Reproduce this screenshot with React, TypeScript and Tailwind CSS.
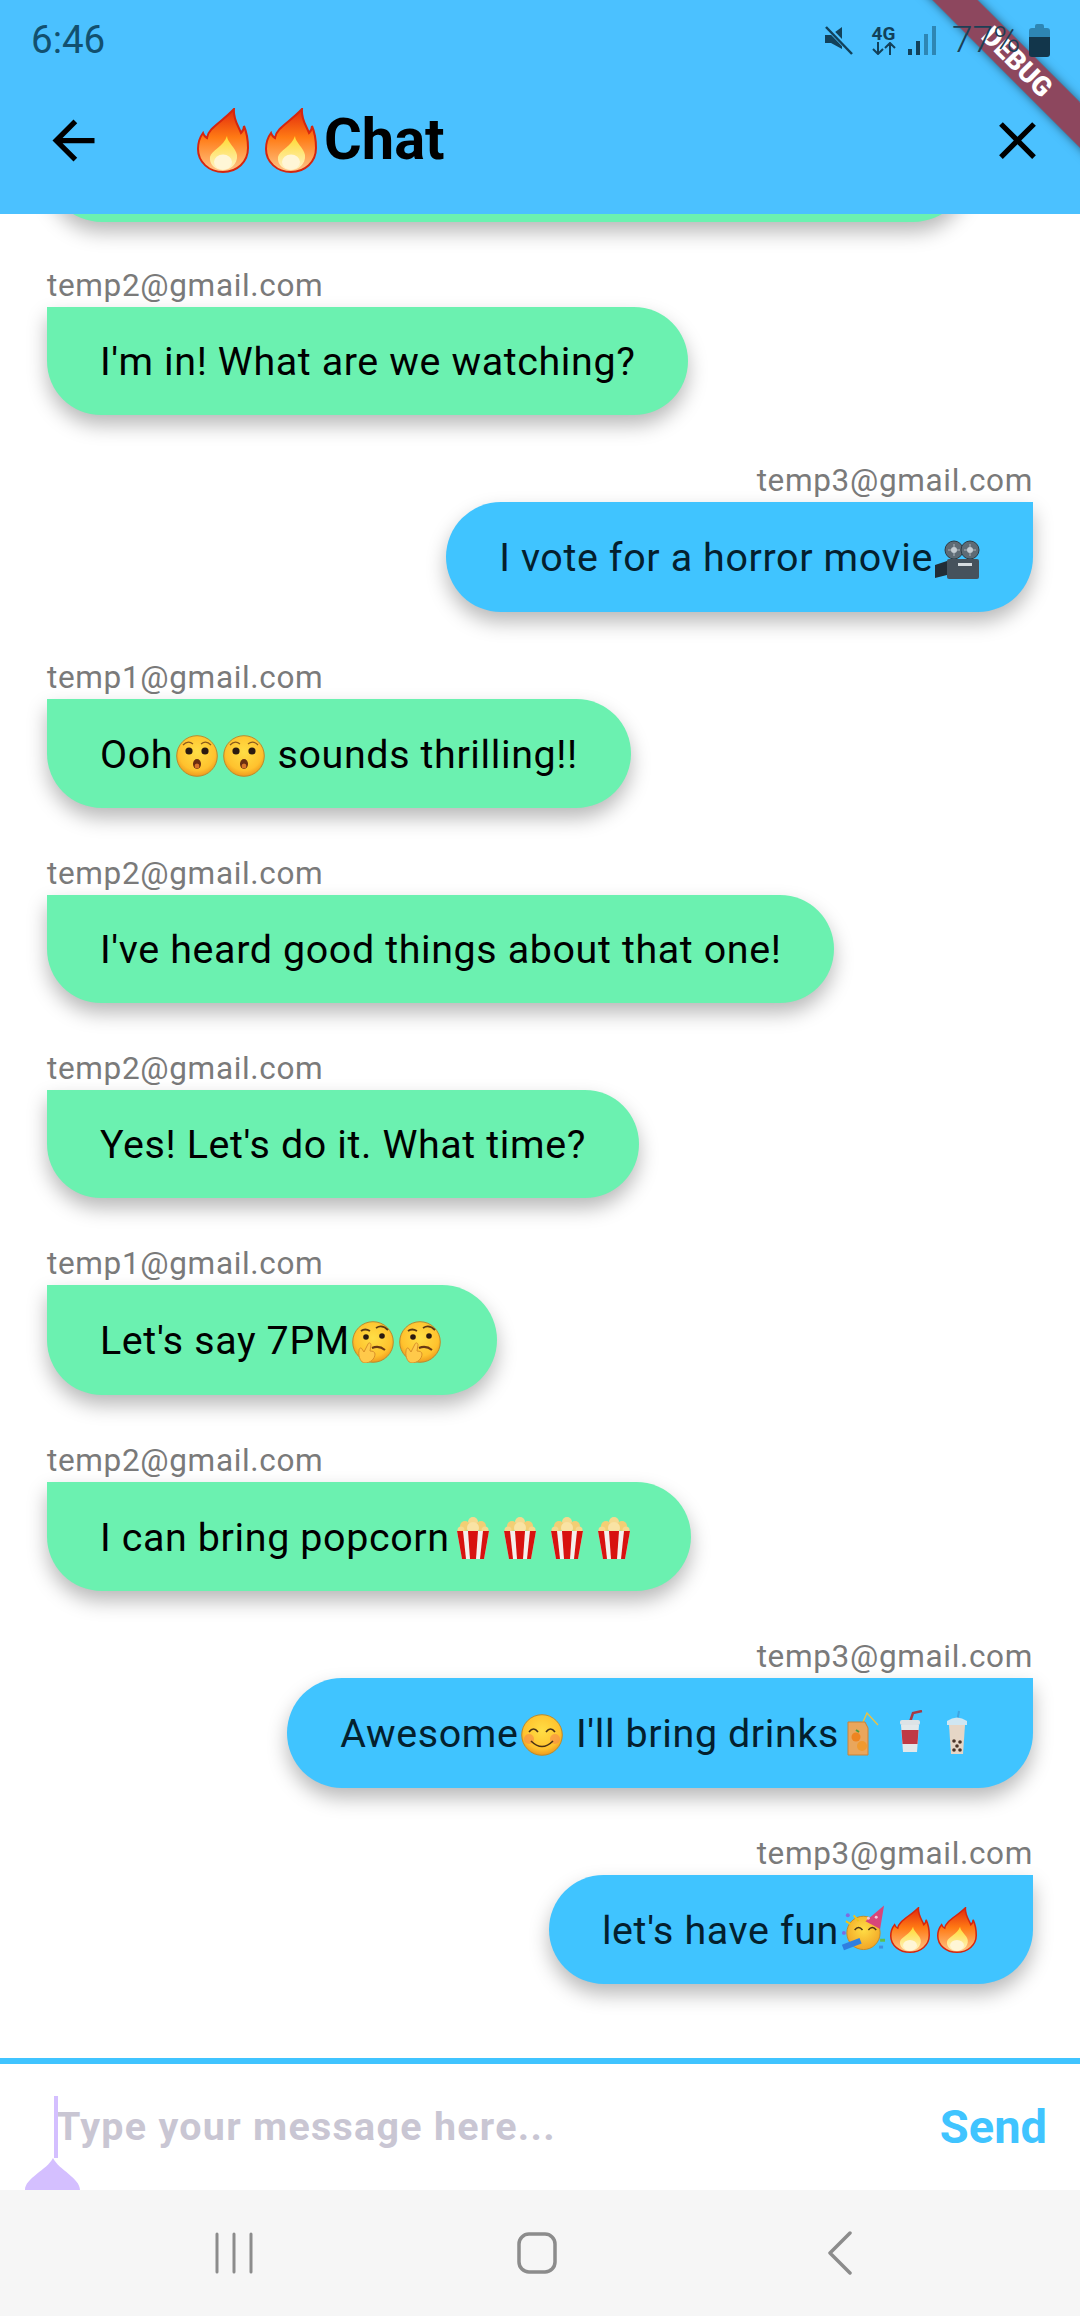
import React from 'react';

// Emoji are drawn by hand: the sandbox has no colour emoji font
function Fire({ w = 40, h = 46 }: { w?: number; h?: number }) {
  return (
    <svg width={w} height={h} viewBox="0 0 52 65" preserveAspectRatio="none">
      <defs>
        <linearGradient id="fireOuter" x1="0" y1="0" x2="0" y2="1">
          <stop offset="0" stopColor="#E2280C" />
          <stop offset="0.45" stopColor="#FF7A14" />
          <stop offset="1" stopColor="#FFC78A" />
        </linearGradient>
        <linearGradient id="fireInner" x1="0" y1="0" x2="0" y2="1">
          <stop offset="0" stopColor="#FFD92E" />
          <stop offset="0.6" stopColor="#FFE98A" />
          <stop offset="1" stopColor="#FFF3C8" />
        </linearGradient>
      </defs>
      <path
        d="M37 1C36 11 41 17 44 25C46 23 47 20 47 18C50 25 51 32 51 40C51 54 40 64 26 64C12 64 1 54 1 41C1 35 3 29 6 25C7 28 8 29 10 30C11 20 25 14 37 1Z"
        fill="url(#fireOuter)"
        stroke="#D5260F"
        strokeWidth="2"
      />
      <path d="M30 28C30 34 39 40 40 47C41 56 33 62 26 62C18 62 12 56 13 49C14 43 27 38 30 28Z" fill="url(#fireInner)" />
      <ellipse cx="26" cy="54" rx="9" ry="7.5" fill="#FFF6D6" />
    </svg>
  );
}

function Face({ children }: { children?: React.ReactNode }) {
  return (
    <svg width="42" height="42" viewBox="0 0 42 42">
      <defs>
        <radialGradient id="faceFill" cx="0.5" cy="0.4" r="0.6">
          <stop offset="0" stopColor="#FFDE45" />
          <stop offset="0.75" stopColor="#FFC22E" />
          <stop offset="1" stopColor="#EE9A1E" />
        </radialGradient>
      </defs>
      <circle cx="21" cy="21" r="20.3" fill="url(#faceFill)" stroke="#BC8A2C" strokeWidth="1" />
      {children}
    </svg>
  );
}

function Hushed() {
  return (
    <Face>
      <path d="M7 10Q12 5 17 9M25 9Q30 5 35 10" fill="none" stroke="#8A5A1C" strokeWidth="1.2" />
      <circle cx="13" cy="16" r="3.6" fill="#2B1A10" />
      <circle cx="29" cy="16" r="3.6" fill="#2B1A10" />
      <ellipse cx="21" cy="29" rx="4" ry="5" fill="#6B2E10" />
      <ellipse cx="21" cy="31" rx="2.4" ry="2.5" fill="#D8742A" />
    </Face>
  );
}

function Thinking() {
  return (
    <Face>
      <path d="M9 10Q13 7 18 10M24 7Q30 3 36 9" fill="none" stroke="#5B3A12" strokeWidth="1.8" />
      <circle cx="14" cy="16" r="2.8" fill="#2B1A10" />
      <circle cx="30" cy="15" r="2.8" fill="#2B1A10" />
      <path d="M20 27Q27 24 33 29" fill="none" stroke="#6B3A12" strokeWidth="2" />
      <path d="M7 30C7 27 9 26 10 28L12 31L16 23C17 21 19 22 19 24L18 30C21 30 23 31 23 33C23 38 18 42 13 42C9 42 6 36 7 30Z" fill="#FFC94A" stroke="#D9902A" strokeWidth="1" />
    </Face>
  );
}

function Smile() {
  return (
    <Face>
      <circle cx="8" cy="25" r="5" fill="#F7894A" opacity="0.6" />
      <circle cx="34" cy="25" r="5" fill="#F7894A" opacity="0.6" />
      <path d="M8 18Q12.5 12 17 18M25 18Q29.5 12 34 18" fill="none" stroke="#4A3214" strokeWidth="1.6" />
      <path d="M10 27Q21 38 32 27" fill="none" stroke="#4A3214" strokeWidth="1.6" />
    </Face>
  );
}

function Party() {
  return (
    <svg width="48" height="50" viewBox="0 0 48 50">
      <defs>
        <radialGradient id="partyFill" cx="0.5" cy="0.4" r="0.6">
          <stop offset="0" stopColor="#FFDE45" />
          <stop offset="1" stopColor="#F2A526" />
        </radialGradient>
      </defs>
      <circle cx="25" cy="30" r="17" fill="url(#partyFill)" stroke="#C48C2A" strokeWidth="1" />
      <path d="M27 18L46 2L42 26Z" fill="#D8467A" />
      <circle cx="30" cy="15" r="1.5" fill="#F5C6DA" />
      <circle cx="38" cy="14" r="1.5" fill="#F5C6DA" />
      <path d="M15 12L20 18M12 21L7 18" stroke="#F0C419" strokeWidth="2" />
      <path d="M16 27Q20 22 24 27M30 27Q34 22 38 27" fill="none" stroke="#4A3214" strokeWidth="1.5" />
      <path d="M22 38L4 45" stroke="#2F7FE0" strokeWidth="6" />
      <circle cx="5" cy="30" r="2" fill="#7F6BE0" />
      <circle cx="9" cy="12" r="2" fill="#7F6BE0" />
      <rect x="42" y="36" width="5" height="3" fill="#5FBF4A" />
      <rect x="41" y="43" width="4" height="3" fill="#3F8FE0" />
    </svg>
  );
}

function Popcorn() {
  return (
    <svg width="34" height="44" viewBox="0 0 34 44">
      <circle cx="17" cy="6" r="5" fill="#F6D98E" />
      <circle cx="9" cy="10" r="5" fill="#F3CE74" />
      <circle cx="25" cy="10" r="5" fill="#F3CE74" />
      <circle cx="17" cy="12" r="6" fill="#F9E3A4" />
      <circle cx="5" cy="14" r="3.5" fill="#F6D98E" />
      <circle cx="29" cy="14" r="3.5" fill="#F6D98E" />
      <path d="M1 15H33L28 43H6Z" fill="#F4F0EC" />
      <path d="M1 15H7L10 43H6Z" fill="#D8120F" />
      <path d="M12 15H22L20 43H14Z" fill="#D8120F" />
      <path d="M27 15H33L28 43H24Z" fill="#D8120F" />
    </svg>
  );
}

function MovieCamera() {
  return (
    <svg width="46" height="40" viewBox="0 0 46 40">
      <circle cx="20" cy="10" r="9" fill="#5E6B75" stroke="#2F3A42" strokeWidth="1" />
      <circle cx="36" cy="10" r="9" fill="#5E6B75" stroke="#2F3A42" strokeWidth="1" />
      <circle cx="20" cy="10" r="3" fill="#C4CCD2" />
      <circle cx="36" cy="10" r="3" fill="#C4CCD2" />
      <path d="M20 4V7M20 13V16M14 10H17M23 10H26M36 4V7M36 13V16M30 10H33M39 10H42" stroke="#AEB6BC" strokeWidth="1" />
      <rect x="13" y="19" width="32" height="20" rx="2" fill="#46525C" />
      <rect x="24" y="23" width="14" height="3" fill="#D5DCE0" />
      <path d="M1 25L13 21V35L1 38Z" fill="#222D36" />
    </svg>
  );
}

function JuiceBox() {
  return (
    <svg width="36" height="46" viewBox="0 0 36 46">
      <path d="M18 12L22 3L33 15" fill="none" stroke="#E5C24A" strokeWidth="1.5" />
      <path d="M3 12H20L23 18V45H3Z" fill="#E9A65C" stroke="#C88339" strokeWidth="1" />
      <circle cx="11" cy="27" r="4.5" fill="#EE8420" />
      <circle cx="17" cy="36" r="5" fill="#F09A2E" />
      <path d="M11 20L14 22" stroke="#4F9A3A" strokeWidth="2" />
    </svg>
  );
}

function CupStraw() {
  return (
    <svg width="34" height="46" viewBox="0 0 34 46">
      <path d="M17 12L20 3L29 1" fill="none" stroke="#A53A44" strokeWidth="2.5" />
      <rect x="7" y="10" width="20" height="5" rx="2" fill="#DDE3E6" />
      <path d="M8 15H26L24 42H10Z" fill="#E3E8EA" />
      <path d="M8.5 20H25.5L24.5 34H9.5Z" fill="#C03A44" />
    </svg>
  );
}

function BubbleTea() {
  return (
    <svg width="30" height="46" viewBox="0 0 30 46">
      <path d="M15 12L17 1" stroke="#3FA4E0" strokeWidth="2" />
      <path d="M5 11Q15 4 25 11V15H5Z" fill="#CFE6F2" />
      <path d="M7 15H23L21 44H9Z" fill="#E6D6C6" />
      <circle cx="12" cy="31" r="1.8" fill="#4A3428" />
      <circle cx="18" cy="32" r="1.8" fill="#4A3428" />
      <circle cx="15" cy="36" r="1.8" fill="#4A3428" />
      <circle cx="12" cy="40" r="1.8" fill="#4A3428" />
      <circle cx="18" cy="40" r="1.8" fill="#4A3428" />
    </svg>
  );
}

function Emo({ children }: { children: React.ReactNode }) {
  return <span className="inline-flex w-[47px] h-[44px] justify-center items-end align-[-9px] leading-none tracking-normal">{children}</span>;
}

type Msg = { sender: string; mine?: boolean; tall?: boolean; body: React.ReactNode };

const messages: Msg[] = [
  { sender: 'temp2@gmail.com', body: "I'm in! What are we watching?" },
  {
    sender: 'temp3@gmail.com',
    mine: true,
    tall: true,
    body: (
      <>
        I vote for a horror movie<Emo><MovieCamera /></Emo>
      </>
    ),
  },
  {
    sender: 'temp1@gmail.com',
    tall: true,
    body: (
      <>
        Ooh<Emo><Hushed /></Emo><Emo><Hushed /></Emo> sounds thrilling!!
      </>
    ),
  },
  { sender: 'temp2@gmail.com', body: "I've heard good things about that one!" },
  { sender: 'temp2@gmail.com', body: "Yes! Let's do it. What time?" },
  {
    sender: 'temp1@gmail.com',
    tall: true,
    body: (
      <>
        Let's say 7PM<Emo><Thinking /></Emo><Emo><Thinking /></Emo>
      </>
    ),
  },
  {
    sender: 'temp2@gmail.com',
    tall: true,
    body: (
      <>
        I can bring popcorn<Emo><Popcorn /></Emo><Emo><Popcorn /></Emo><Emo><Popcorn /></Emo><Emo><Popcorn /></Emo>
      </>
    ),
  },
  {
    sender: 'temp3@gmail.com',
    mine: true,
    tall: true,
    body: (
      <>
        Awesome<Emo><Smile /></Emo> I'll bring drinks<Emo><JuiceBox /></Emo><Emo><CupStraw /></Emo><Emo><BubbleTea /></Emo>
      </>
    ),
  },
  {
    sender: 'temp3@gmail.com',
    mine: true,
    tall: true,
    body: (
      <>
        let's have fun<Emo><Party /></Emo><Emo><Fire /></Emo><Emo><Fire /></Emo>
      </>
    ),
  },
];

function Bubble({ msg }: { msg: Msg }) {
  return (
    <div className={msg.mine ? 'flex flex-col items-end' : 'flex flex-col items-start'}>
      <div className="h-[42px] leading-[42px] text-[31.5px] tracking-[0.66px] text-[#7A7A7A]">{msg.sender}</div>
      <div
        className={`${msg.tall ? 'h-[109.5px] leading-[109.5px]' : 'h-[108px] leading-[108px]'} ${
          msg.mine ? 'bg-[#40C4FF] text-[#04202E] rounded-tl-[55px]' : 'bg-[#6BF1B0] text-black rounded-tr-[55px]'
        } px-[53px] pt-[1px] text-[39.4px] tracking-[0.63px] whitespace-nowrap rounded-b-[55px] shadow-[0_10px_20px_rgba(0,0,0,0.28)]`}
      >
        {msg.body}
      </div>
    </div>
  );
}

function StatusIcons() {
  return (
    <div className="flex items-center text-[#12415A]">
      <svg width="30" height="30" viewBox="0 0 30 30" className="mr-[17px]">
        <path d="M1 10H7L18 2V24L7 18H1Z" fill="#12415A" />
        <path d="M2 1L29 29" stroke="#4BC1FF" strokeWidth="5" />
        <path d="M2 2L28 29" stroke="#12415A" strokeWidth="2.5" />
      </svg>
      <div className="flex flex-col items-center w-[25px] mr-[12px]">
        <span className="text-[19px] font-bold leading-[17px]">4G</span>
        <svg width="24" height="13" viewBox="0 0 24 13">
          <path d="M6 0V12M1 7L6 12L11 7M18 13V1M13 6L18 1L23 6" fill="none" stroke="#12415A" strokeWidth="2" />
        </svg>
      </div>
      <svg width="28" height="29" viewBox="0 0 28 29" className="mr-[16px]">
        <rect x="0" y="23" width="4" height="6" fill="#12415A" />
        <rect x="8" y="15" width="4" height="14" fill="#12415A" />
        <rect x="16" y="8" width="4" height="21" fill="#2E86B4" />
        <rect x="24" y="0" width="4" height="29" fill="#2E86B4" />
      </svg>
      <span className="text-[37px] font-light w-[77px] text-[#1B3F55]">77%</span>
      <svg width="21" height="33" viewBox="0 0 21 33">
        <path d="M6 2Q6 0 8 0H13Q15 0 15 2V4H18Q21 4 21 7V13H0V7Q0 4 3 4H6Z" fill="#2E86B4" />
        <path d="M0 13H21V30Q21 33 18 33H3Q0 33 0 30Z" fill="#12364B" />
      </svg>
    </div>
  );
}

export default function App() {
  return (
    <div className="relative flex flex-col w-[1080px] h-[2316px] overflow-hidden bg-white font-['Roboto',sans-serif]">
      <header className="h-[214px] shrink-0 bg-[#4BC1FF]">
        {/* system status bar sits on top of the app's debug ribbon */}
        <div className="relative z-20 flex items-center justify-between h-[80px] pl-[31px] pr-[30px]">
          <span className="text-[38.5px] text-[#12506F]">6:46</span>
          <StatusIcons />
        </div>
        <div className="flex items-center h-[120px] pl-[42px] pr-[31px]">
          <svg width="63" height="63" viewBox="0 0 24 24" fill="#000">
            <path d="M20 11H7.83l5.59-5.59L12 4l-8 8 8 8 1.41-1.41L7.83 13H20v-2z" />
          </svg>
          <div className="flex items-center ml-[92px] flex-1">
            <span className="w-[68px]"><Fire w={52} h={65} /></span>
            <span className="w-[59px]"><Fire w={52} h={65} /></span>
            <span className="text-[57.75px] font-bold text-black leading-none">Chat</span>
          </div>
          <svg width="63" height="63" viewBox="0 0 24 24" fill="#000">
            <path d="M19 6.41L17.59 5 12 10.59 6.41 5 5 6.41 10.59 12 5 17.59 6.41 19 12 13.41 17.59 19 19 17.59 13.41 12z" />
          </svg>
        </div>
      </header>

      <main className="flex-1 flex flex-col gap-[45px] px-[47px] overflow-hidden">
        <div className="w-[921px] h-[109px] shrink-0 -mt-[101px] -mb-[2px] bg-[#6BF1B0] rounded-tr-[55px] rounded-b-[55px] shadow-[0_10px_20px_rgba(0,0,0,0.28)]" />
        {messages.map((m, i) => (
          <Bubble key={i} msg={m} />
        ))}
      </main>

      <div className="relative h-[132px] shrink-0 flex items-center justify-between border-t-[6px] border-[#40C4FF] pl-[56px] pr-[33px]">
        <span className="text-[39.4px] tracking-[1.3px] font-bold text-[#C9C6D3]">Type your message here...</span>
        <span className="text-[47px] font-bold text-[#40C4FF]">Send</span>
        <div className="absolute left-[54px] top-[32px] w-[4px] h-[62px] bg-[#D4BFFF]" />
        <svg width="55" height="32" viewBox="0 0 55 32" className="absolute left-[25px] bottom-0">
          <path d="M28 0C34 12 55 20 55 32H0C0 20 22 12 28 0Z" fill="#D4BFFF" />
        </svg>
      </div>

      <nav className="h-[126px] shrink-0 flex items-center justify-center pr-[6px] bg-[#F6F6F6]">
        <div className="w-[303px] flex justify-center">
          <svg width="38" height="42" viewBox="0 0 38 42" fill="none" stroke="#8C8C8C" strokeWidth="3" strokeLinecap="round">
            <path d="M2 2V40M19 2V40M36 2V40" />
          </svg>
        </div>
        <div className="w-[303px] flex justify-center">
          <svg width="40" height="42" viewBox="0 0 40 42" fill="none">
            <rect x="2" y="2" width="36" height="38" rx="10" stroke="#8C8C8C" strokeWidth="3.5" />
          </svg>
        </div>
        <div className="w-[303px] flex justify-center">
          <svg width="24" height="44" viewBox="0 0 24 44" fill="none" stroke="#8C8C8C" strokeWidth="3.5" strokeLinecap="round" strokeLinejoin="round">
            <path d="M22 2L2 22L22 42" />
          </svg>
        </div>
      </nav>

      {/* flutter debug ribbon */}
      <div className="absolute z-10 left-[867px] top-[46px] w-[300px] h-[32px] rotate-45 flex items-center justify-center bg-[#b50000a1] shadow-[0_0_10px_rgba(0,0,0,0.5)]">
        <span className="text-[27px] font-black leading-none text-white">DEBUG</span>
      </div>
    </div>
  );
}
